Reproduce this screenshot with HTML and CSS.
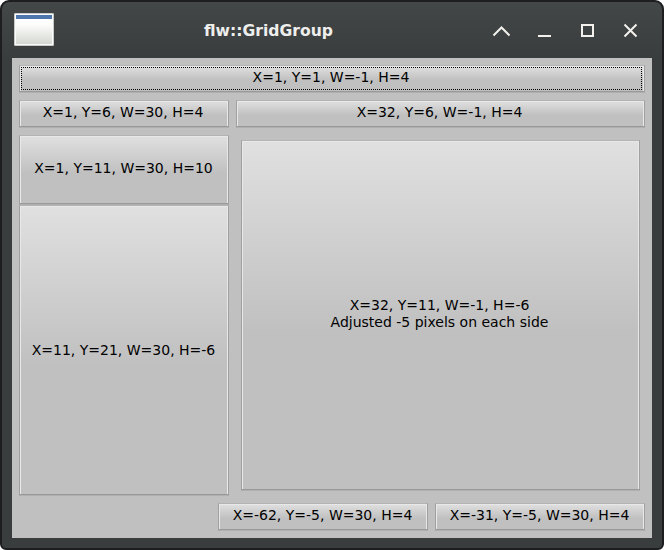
FILE: index.html
```html
<!DOCTYPE html>
<html lang="en">
<head>
<meta charset="utf-8">
<title>flw::GridGroup</title>
<link rel="stylesheet" href="styles.css">
</head>
<body>
<div class="window">
  <header class="titlebar">
    <div class="app-icon"><span></span></div>
    <h1>flw::GridGroup</h1>
    <svg class="controls" width="152" height="20" viewBox="0 0 152 20" fill="none" stroke="#f2f1ed" stroke-width="2">
      <path d="M5.5 15.5 L13.5 7.5 L21.5 15.5"/>
      <path d="M50 16 H63"/>
      <rect x="94" y="5" width="11" height="11"/>
      <path d="M136.5 4.5 L148.5 16.5 M148.5 4.5 L136.5 16.5"/>
    </svg>
  </header>
  <main class="grid">
    <button class="btn top focused">X=1, Y=1, W=-1, H=4</button>
    <button class="btn">X=1, Y=6, W=30, H=4</button>
    <button class="btn">X=32, Y=6, W=-1, H=4</button>
    <div class="side">
      <button class="btn short">X=1, Y=11, W=30, H=10</button>
      <button class="btn tall">X=11, Y=21, W=30, H=-6</button>
    </div>
    <button class="btn big">X=32, Y=11, W=-1, H=-6<br>Adjusted -5 pixels on each side</button>
    <div class="bottom">
      <button class="btn">X=-62, Y=-5, W=30, H=4</button>
      <button class="btn">X=-31, Y=-5, W=30, H=4</button>
    </div>
  </main>
</div>
</body>
</html>
```
FILE: styles.css
```css
* { box-sizing: border-box; }
body { margin: 0; background: #fff; font-family: "DejaVu Sans", sans-serif; }
.window {
  width: 664px;
  height: 550px;
  padding: 0 10px 10px;
  border: 2px solid #1c1e1f;
  border-radius: 9px 9px 6px 6px;
  background: linear-gradient(#444748, #393d3e 56px);
}
.titlebar {
  height: 56px;
  padding: 11px 0 0 2px;
  display: grid;
  grid-template-columns: 40px 430px 152px;
  column-gap: 2px;
  align-items: start;
}
.app-icon {
  width: 40px;
  height: 33px;
  padding: 1px;
  border: 1px solid #c9cbc9;
  background: #fbfbfb;
  border-radius: 1px;
}
.app-icon span {
  display: block;
  height: 29px;
  background: linear-gradient(#4d76ae 4px, #fff 4px, #fcfcfb 10px, #d5d8d1);
}
h1 {
  margin: 8px 5px 0 0;
  color: #eeeeec;
  font: bold 15.6px/20px "DejaVu Sans", sans-serif;
  text-align: center;
}
.controls { margin: 7px 0 0; }
.grid {
  width: 640px;
  height: 480px;
  padding: 7px;
  background: #c0c0c0;
  display: grid;
  grid-template-columns: 210px 1fr;
  grid-template-rows: 28px 28px 1fr 28px;
  gap: 7px;
}
.top, .bottom { grid-column: 1 / -1; }
.bottom { display: flex; justify-content: flex-end; gap: 7px; }
.bottom .btn { width: 210px; }
.side { display: flex; flex-direction: column; }
.short { height: 70px; }
.tall { flex: 1; }
.big { margin: 5px; }
.btn {
  position: relative;
  padding: 0 2px 4px 0;
  border: 1px solid #a0a0a0;
  border-top-color: #b3b3b3;
  border-bottom-color: #b0b0b0;
  color: #000;
  background: linear-gradient(#e0e0e0, #c0c0c0 55%);
  box-shadow: inset 0 -1px #999, inset 1px 0 #e8e8e8, inset -1px 0 #e8e8e8, inset 0 1px #e8e8e8;
  font: 14px/17px "DejaVu Sans", sans-serif;
  text-align: center;
}
.bottom .btn, .side .btn { padding-right: 1px; }
.side .tall { padding-bottom: 1px; }
.focused::after {
  content: "";
  position: absolute;
  inset: 1px 2px 2px 1px;
  background:
    repeating-linear-gradient(90deg, #000 0 1px, transparent 1px 2px) top / 100% 1px no-repeat,
    repeating-linear-gradient(90deg, #000 0 1px, transparent 1px 2px) bottom / 100% 1px no-repeat,
    repeating-linear-gradient(#000 0 1px, transparent 1px 2px) left / 1px 100% no-repeat,
    repeating-linear-gradient(#000 0 1px, transparent 1px 2px) right / 1px 100% no-repeat;
}
```
